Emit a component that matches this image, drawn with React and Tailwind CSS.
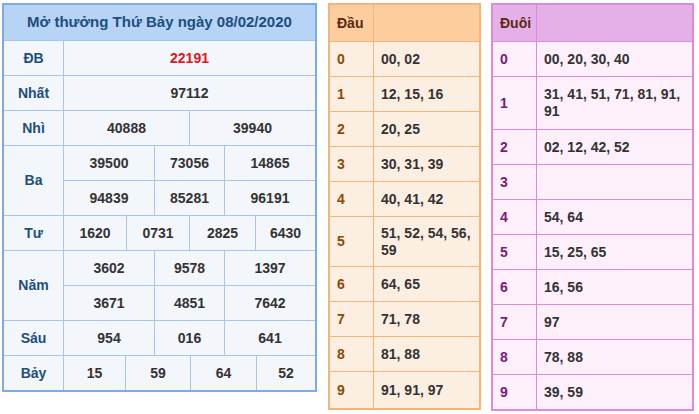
const font = { fontFamily: '"Liberation Sans", Arial, sans-serif' };

function Row({ label, h = 'h-[35px]', cells, red }) {
  return (
    <div className={`flex border-t border-[#a9c5ee] ${h}`}>
      <div className="w-[60px] shrink-0 border-r border-[#a9c5ee] flex items-center justify-center text-[#1d4f7c]">
        {label}
      </div>
      <div className="flex-1 flex flex-col">
        {cells.map((line, i) => (
          <div key={i} className={`flex flex-1 ${i > 0 ? 'border-t border-[#a9c5ee]' : ''}`}>
            {line.map(([v, w], j) => (
              <div
                key={j}
                className={`${w} flex items-center justify-center ${j > 0 ? 'border-l border-[#a9c5ee]' : ''} ${red ? 'text-[#e3161b]' : 'text-[#333]'}`}
              >
                {v}
              </div>
            ))}
          </div>
        ))}
      </div>
    </div>
  );
}

function Side({ title, rows, theme }) {
  return (
    <div className={`flex flex-col border-2 ${theme.border} ${theme.bg} ${theme.w}`}>
      <div className={`flex h-[36px] ${theme.head}`}>
        <div className={`w-[44px] shrink-0 border-r ${theme.line} flex items-center pl-[7px] text-[#5a2a10]`}>{title}</div>
        <div className="flex-1" />
      </div>
      {rows.map(([k, v, h]) => (
        <div key={k} className={`flex border-t ${theme.line} ${h || 'h-[35px]'}`}>
          <div className={`w-[44px] shrink-0 border-r ${theme.line} flex items-center pl-[7px] ${theme.digit}`}>{k}</div>
          <div className="flex-1 flex items-center px-[7px] text-[#333] leading-[17px]">{v}</div>
        </div>
      ))}
    </div>
  );
}

export default function App() {
  return (
    <div className="w-[699px] h-[414px] bg-white flex items-start pt-[3px] pl-[2px] text-[14px] font-bold" style={font}>
      <div className="w-[315px] border-2 border-[#7eaae6] bg-[#f3f6fb] flex flex-col">
        <div className="h-[35px] bg-[#b7d4f7] flex items-center justify-center text-[#1d4f7c] text-[15px]">
          Mở thưởng Thứ Bảy ngày 08/02/2020
        </div>
        <Row label="ĐB" red cells={[[['22191', 'flex-1']]]} />
        <Row label="Nhất" cells={[[['97112', 'flex-1']]]} />
        <Row label="Nhì" cells={[[['40888', 'w-[125px]'], ['39940', 'flex-1']]]} />
        <Row label="Ba" h="h-[70px]" cells={[
          [['39500', 'w-[90px]'], ['73056', 'w-[70px]'], ['14865', 'flex-1']],
          [['94839', 'w-[90px]'], ['85281', 'w-[70px]'], ['96191', 'flex-1']],
        ]} />
        <Row label="Tư" cells={[[['1620', 'w-[62px]'], ['0731', 'w-[63px]'], ['2825', 'w-[66px]'], ['6430', 'flex-1']]]} />
        <Row label="Năm" h="h-[70px]" cells={[
          [['3602', 'w-[90px]'], ['9578', 'w-[70px]'], ['1397', 'flex-1']],
          [['3671', 'w-[90px]'], ['4851', 'w-[70px]'], ['7642', 'flex-1']],
        ]} />
        <Row label="Sáu" cells={[[['954', 'w-[90px]'], ['016', 'w-[70px]'], ['641', 'flex-1']]]} />
        <Row label="Bảy" cells={[[['15', 'w-[61px]'], ['59', 'w-[65px]'], ['64', 'w-[66px]'], ['52', 'flex-1']]]} />
      </div>
      <div className="ml-[11px]">
        <Side
          title="Đầu"
          theme={{ w: 'w-[153px]', border: 'border-[#f3b57a]', bg: 'bg-[#fdeee2]', head: 'bg-[#fbcd9f]', line: 'border-[#f3b57a]', digit: 'text-[#8a4a0a]' }}
          rows={[
            ['0', '00, 02'], ['1', '12, 15, 16'], ['2', '20, 25'], ['3', '30, 31, 39'], ['4', '40, 41, 42'],
            ['5', '51, 52, 54, 56, 59', 'h-[50px]'], ['6', '64, 65'], ['7', '71, 78'], ['8', '81, 88'], ['9', '91, 91, 97', 'h-[37px]'],
          ]}
        />
      </div>
      <div className="ml-[10px]">
        <Side
          title="Đuôi"
          theme={{ w: 'w-[203px]', border: 'border-[#de89dc]', bg: 'bg-[#fdf0fb]', head: 'bg-[#e5b0e8]', line: 'border-[#de89dc]', digit: 'text-[#7a1a7a]' }}
          rows={[
            ['0', '00, 20, 30, 40'], ['1', '31, 41, 51, 71, 81, 91, 91', 'h-[53px]'], ['2', '02, 12, 42, 52'], ['3', ''],
            ['4', '54, 64'], ['5', '15, 25, 65'], ['6', '16, 56'], ['7', '97'], ['8', '78, 88'], ['9', '39, 59'],
          ]}
        />
      </div>
    </div>
  );
}
